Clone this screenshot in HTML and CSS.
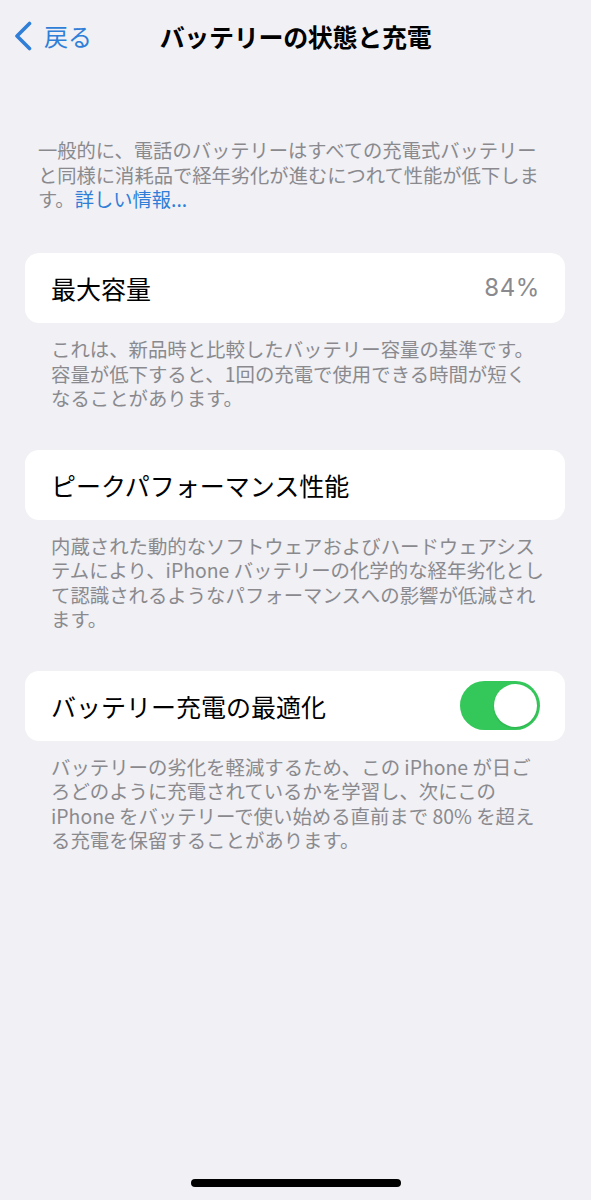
FILE: index.html
```html
<!DOCTYPE html>
<html lang="ja">
<head>
<meta charset="utf-8">
<title>バッテリーの状態と充電</title>
<link rel="stylesheet" href="styles.css">
</head>
<body>
<div class="screen">
  <header class="nav">
    <div class="back">
      <svg class="chevron" width="20" height="30" viewBox="0 0 20 30"><path d="M16.5 2.5 L4 15 L16.5 27.5" fill="none" stroke="#2f7ed8" stroke-width="3.6" stroke-linecap="round" stroke-linejoin="round"/></svg>
      <span class="back-label">戻る</span>
    </div>
    <h1 class="title">バッテリーの状態と充電</h1>
    <div class="spacer"></div>
  </header>

  <p class="intro">一般的に、電話のバッテリーはすべての充電式バッテリー<br>と同様に消耗品で経年劣化が進むにつれて性能が低下しま<br>す。<span class="link">詳しい情報...</span></p>

  <section class="group first">
    <div class="card">
      <span class="label">最大容量</span>
      <span class="value">84%</span>
    </div>
    <p class="note">これは、新品時と比較したバッテリー容量の基準です。<br>容量が低下すると、1回の充電で使用できる時間が短く<br>なることがあります。</p>
  </section>

  <section class="group">
    <div class="card">
      <span class="label">ピークパフォーマンス性能</span>
    </div>
    <p class="note">内蔵された動的なソフトウェアおよびハードウェアシス<br>テムにより、iPhone バッテリーの化学的な経年劣化とし<br>て認識されるようなパフォーマンスへの影響が低減され<br>ます。</p>
  </section>

  <section class="group">
    <div class="card">
      <span class="label">バッテリー充電の最適化</span>
      <span class="toggle"><span class="knob"></span></span>
    </div>
    <p class="note">バッテリーの劣化を軽減するため、この iPhone が日ご<br>ろどのように充電されているかを学習し、次にこの<br>iPhone をバッテリーで使い始める直前まで 80% を超え<br>る充電を保留することがあります。</p>
  </section>

  <div class="fill"></div>
  <div class="home-bar"><span class="indicator"></span></div>
</div>
</body>
</html>
```

FILE: styles.css
```css
html, body {
  margin: 0;
  padding: 0;
  background: #f0f0f5;
}

body {
  font-family: "Noto Sans CJK JP", "Noto Sans", sans-serif;
  color: #000;
}

.screen {
  width: 591px;
  height: 1200px;
  display: flex;
  flex-direction: column;
}

.nav {
  height: 72px;
  display: grid;
  grid-template-columns: 1fr auto 1fr;
  align-items: center;
}

.back {
  display: flex;
  align-items: center;
  padding-left: 13px;
  gap: 11px;
  color: #2f7ed8;
}

.chevron {
  display: block;
}

.back-label {
  font-size: 24px;
  line-height: 30px;
}

.title {
  margin: 0;
  font-size: 25px;
  font-weight: 700;
  line-height: 30px;
  letter-spacing: -0.3px;
}

.intro {
  margin: 66px 0 0 0;
  padding-left: 38px;
  font-size: 19.3px;
  line-height: 24.5px;
  color: #8a8a8e;
  white-space: nowrap;
}

.link {
  color: #2f7ed8;
}

.group {
  margin-top: 39px;
}

.group.first {
  margin-top: 41.5px;
}

.card {
  margin: 0 26px 0 25px;
  height: 70px;
  background: #fff;
  border-radius: 14px;
  display: flex;
  align-items: center;
  justify-content: space-between;
  padding: 0 25px 0 26px;
}

.label {
  font-size: 25px;
  line-height: 30px;
}

.value {
  font-family: "Inter", "Noto Sans", sans-serif;
  font-size: 24px;
  line-height: 30px;
  letter-spacing: 0.6px;
  color: #8a8a8e;
}

.note {
  margin: 14px 0 0 0;
  padding-left: 51px;
  font-size: 19.4px;
  line-height: 24.5px;
  color: #8a8a8e;
  white-space: nowrap;
}

.toggle {
  width: 80px;
  height: 49px;
  border-radius: 25px;
  background: #34c759;
  display: flex;
  align-items: center;
  justify-content: flex-end;
  padding: 0 3px;
  box-sizing: border-box;
}

.knob {
  width: 43px;
  height: 43px;
  border-radius: 50%;
  background: #fff;
  box-shadow: 0 1px 2px rgba(0,0,0,0.12);
}

.fill {
  flex: 1;
}

.home-bar {
  height: 21px;
  display: flex;
  justify-content: center;
}

.indicator {
  width: 210px;
  height: 8px;
  border-radius: 4px;
  background: #000;
}
```
